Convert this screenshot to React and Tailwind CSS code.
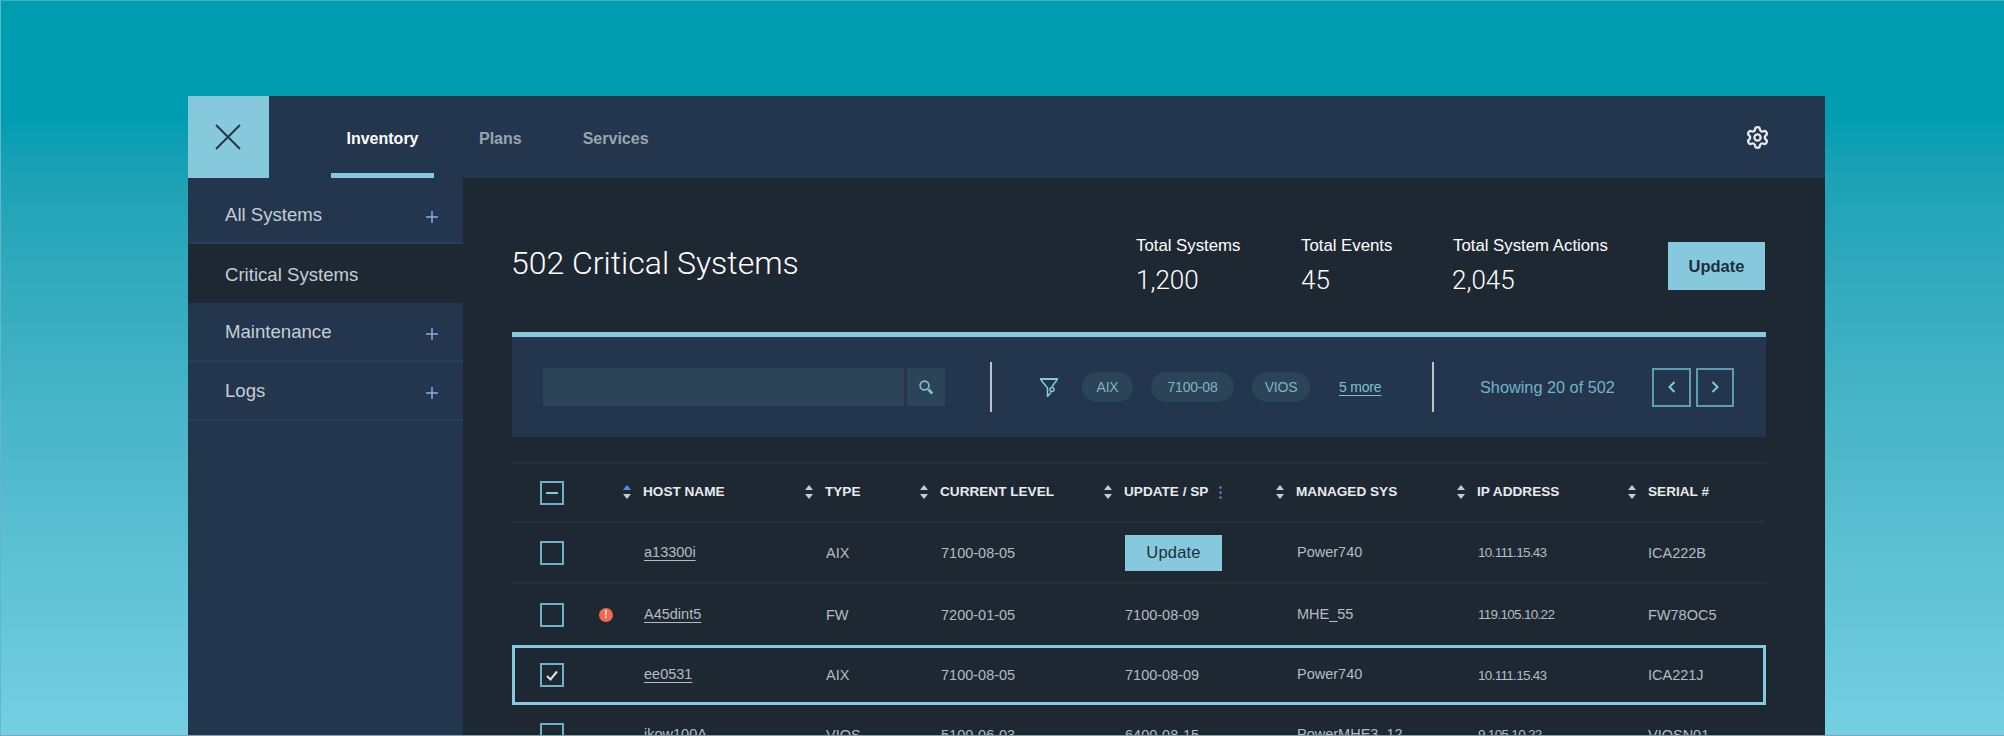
import { Settings } from 'lucide-react';

const sans = "font-['Liberation_Sans',Arial,sans-serif]";
const light = "font-['Roboto',sans-serif] font-light";

function PlusIcon() {
  return (
    <svg className="w-[12px] h-[12px] mt-[4px]" viewBox="0 0 12 12" fill="none" stroke="#8ba6e0" strokeWidth="1.5">
      <path d="M6 0v12M0 6h12" />
    </svg>
  );
}

function SortIcon({ active }) {
  return (
    <svg className="w-[10px] h-[16px] shrink-0" viewBox="0 0 10 16">
      <path d="M5 1l4 5H1z" fill={active ? '#5b86e5' : '#c4cbd1'} />
      <path d="M5 15l4-5H1z" fill="#c4cbd1" />
    </svg>
  );
}

function Checkbox({ state }) {
  return (
    <div className="w-[24px] h-[24px] border-2 border-[#6fb1c6] flex items-center justify-center shrink-0">
      {state === 'mixed' && <div className="w-[12px] h-[2px] bg-[#87c9dc]" />}
      {state === 'checked' && (
        <svg className="w-[12px] h-[11px]" viewBox="0 0 12 11" fill="none" stroke="#d7e6ec" strokeWidth="2">
          <path d="M1 6l3.5 3.5L11 1.5" />
        </svg>
      )}
    </div>
  );
}

const cols = 'grid grid-cols-[110px_182px_115px_184px_172px_181px_171px_139px] items-center';

const headers = ['HOST NAME', 'TYPE', 'CURRENT LEVEL', 'UPDATE / SP', 'MANAGED SYS', 'IP ADDRESS', 'SERIAL #'];

const rows = [
  { host: 'a13300i', type: 'AIX', level: '7100-08-05', update: null, sys: 'Power740', ip: '10.111.15.43', serial: 'ICA222B' },
  { host: 'A45dint5', type: 'FW', level: '7200-01-05', update: '7100-08-09', sys: 'MHE_55', ip: '119.105.10.22', serial: 'FW78OC5', alert: true },
  { host: 'ee0531', type: 'AIX', level: '7100-08-05', update: '7100-08-09', sys: 'Power740', ip: '10.111.15.43', serial: 'ICA221J', selected: true },
  { host: 'ikow100A', type: 'VIOS', level: '5100-06-03', update: '6400-08-15', sys: 'PowerMHE3_12', ip: '9.105.10.22', serial: 'VIOSN01' },
];

function Row({ row }) {
  const rowClass = row.selected
    ? 'h-[60px] shadow-[inset_0_0_0_3px_#87c9dc]'
    : row.alert
      ? 'h-[61px]'
      : 'h-[61px] border-b-2 border-[#232f3e]';
  return (
    <div className={`${cols} ${rowClass} text-[14.5px] text-[#b4bbc1]`}>
      <div className="flex items-center pl-[28px]">
        <Checkbox state={row.selected ? 'checked' : 'none'} />
        {row.alert && (
          <div className="ml-[35px] w-[14px] h-[14px] rounded-full bg-[#ee6a50] flex items-center justify-center text-[10px] font-bold text-white leading-none">
            !
          </div>
        )}
      </div>
      <div className="pl-[22px]">
        <span className="underline underline-offset-[3px]">{row.host}</span>
      </div>
      <div className="pl-[22px] pt-[2px]">{row.type}</div>
      <div className="pl-[22px] pt-[2px]">{row.level}</div>
      <div className="pl-[22px] pt-[2px]">
        {row.update || (
          <button className="w-[97px] h-[36px] -mt-[2px] bg-[#87c9dc] text-[#1e2f3f] text-[16.5px] tracking-[0.2px]">
            Update
          </button>
        )}
      </div>
      <div className="pl-[22px]">{row.sys}</div>
      <div className="pl-[22px] pt-[2px] text-[13.5px] tracking-[-0.7px]">{row.ip}</div>
      <div className="pl-[21px] pt-[2px]">{row.serial}</div>
    </div>
  );
}

export default function App() {
  return (
    <div className={`${sans} w-[2004px] h-[736px] overflow-hidden border-l border-t border-b border-l-[#5fb9c8] border-t-[#3fb0c0] border-b-[#7fa6b0] pt-[95px] pl-[187px] bg-linear-to-b from-[#009db1] from-[16%] to-[#74cfe1]`}>
      <div className="w-[1637px] h-[639px] flex flex-col overflow-hidden bg-[#23364e]">
        {/* Top nav */}
        <header className="h-[82px] shrink-0 flex">
          <div className="w-[81px] h-[82px] bg-[#87c9dc] flex items-center justify-center pr-[1px]">
            <svg className="w-[26px] h-[26px]" viewBox="0 0 26 26" fill="none" stroke="#263647" strokeWidth="2">
              <path d="M1 1l24 24M25 1L1 25" />
            </svg>
          </div>
          <nav className="flex ml-[62px] text-[16px] font-bold">
            <div className="w-[103px] h-[82px] flex items-center justify-center pt-[9px] border-b-[5px] border-[#87c9dc] text-white">
              Inventory
            </div>
            <div className="h-[82px] flex items-center pt-[4px] ml-[45px] text-[#9aa5ae]">Plans</div>
            <div className="h-[82px] flex items-center pt-[4px] ml-[61px] text-[#9aa5ae]">Services</div>
          </nav>
          <div className="ml-auto mr-[55px] h-[82px] flex items-center pt-[1px]">
            <Settings className="w-[25px] h-[25px] text-[#e6e9ec]" strokeWidth={2.2} />
          </div>
        </header>

        <div className="flex flex-1 min-h-0">
          {/* Sidebar */}
          <aside className="w-[275px] shrink-0 text-[18.6px] text-[#c6cdd3]">
            <div className="h-[66px] pl-[37px] pr-[25px] pt-[10px] flex items-center justify-between border-b-2 border-[#263f5b]">
              All Systems
              <PlusIcon />
            </div>
            <div className="h-[59px] pl-[37px] pt-[3px] flex items-center bg-[#1e2833]">Critical Systems</div>
            <div className="h-[59px] pl-[37px] pr-[25px] flex items-center justify-between border-b-2 border-[#263f5b]">
              Maintenance
              <PlusIcon />
            </div>
            <div className="h-[59px] pl-[37px] pr-[25px] flex items-center justify-between border-b-2 border-[#263f5b]">
              Logs
              <PlusIcon />
            </div>
          </aside>

          {/* Main content */}
          <main className="flex-1 min-w-0 bg-[#1e2833] pl-[49px] pr-[59px]">
            <div className="h-[154px] pt-[22px] flex items-center">
              <h1 className={`${light} text-[32px] text-white -mt-[6px] -ml-[1px]`}>502 Critical Systems</h1>
              <div className="ml-auto flex items-center">
                <div className="w-[165px]">
                  <div className="text-[16.8px] text-white -mt-[4px]">Total Systems</div>
                  <div className={`${light} text-[26px] text-white mt-[6px] leading-[30px]`}>1,200</div>
                </div>
                <div className="w-[152px]">
                  <div className="text-[16.8px] text-white -mt-[4px]">Total Events</div>
                  <div className={`${light} text-[26px] text-white mt-[6px] leading-[30px]`}>45</div>
                </div>
                <div className="w-[215px]">
                  <div className="text-[16.8px] text-white -mt-[4px]">Total System Actions</div>
                  <div className={`${light} text-[26px] text-white mt-[6px] leading-[30px] -ml-[1px]`}>2,045</div>
                </div>
                <button className="w-[97px] h-[48px] mr-[1px] bg-[#87c9dc] text-[#1e2f3f] text-[16.5px] font-bold">
                  Update
                </button>
              </div>
            </div>

            {/* Toolbar */}
            <div className="h-[105px] border-t-[5px] border-[#87c9dc] bg-[#23364e] flex items-center pl-[31px]">
              <div className="w-[361px] h-[38px] bg-[#2c4457]" />
              <div className="ml-[3px] w-[38px] h-[38px] bg-[#2c4457] flex items-center justify-center">
                <svg className="w-[15px] h-[15px]" viewBox="0 0 15 15" fill="none" stroke="#7fc0d4">
                  <circle cx="5.5" cy="5.5" r="4.4" strokeWidth="1.6" />
                  <path d="M9.5 9.5l3.8 4" strokeWidth="2.6" />
                </svg>
              </div>
              <div className="ml-[45px] w-[2px] h-[50px] bg-[#b9c4cf]" />
              <svg className="ml-[48px] w-[18px] h-[19px]" viewBox="0 0 18 19" fill="none" stroke="#87c9dc" strokeWidth="1.5">
                <path d="M0 1h18" strokeWidth="2" />
                <path d="M1 2l6.5 8v8.5L11 14.5M17 2l-5 6.5" />
                <circle cx="12" cy="11.5" r="2" />
              </svg>
              <div className="ml-[24px] w-[51px] h-[30px] rounded-full bg-[#2c4457] flex items-center justify-center text-[14px] tracking-[-0.2px] text-[#80b2c4]">AIX</div>
              <div className="ml-[18px] w-[83px] h-[30px] rounded-full bg-[#2c4457] flex items-center justify-center text-[14px] tracking-[-0.2px] text-[#80b2c4]">7100-08</div>
              <div className="ml-[18px] w-[58px] h-[30px] rounded-full bg-[#2c4457] flex items-center justify-center text-[14px] tracking-[-0.2px] text-[#80b2c4]">VIOS</div>
              <a className="ml-[29px] w-[43px] whitespace-nowrap text-[14px] tracking-[-0.2px] text-[#80c0d4] underline underline-offset-[3px]">5 more</a>
              <div className="ml-[50px] w-[2px] h-[50px] bg-[#b9c4cf]" />
              <div className="ml-[46px] w-[136px] whitespace-nowrap text-[16.3px] text-[#71b3c7]">Showing 20 of 502</div>
              <button className="ml-[36px] w-[39px] h-[39px] border-2 border-[#5d9db2] flex items-center justify-center">
                <svg className="w-[8px] h-[12px]" viewBox="0 0 8 12" fill="none" stroke="#87c9dc" strokeWidth="2">
                  <path d="M6.5 1L1.5 6l5 5" />
                </svg>
              </button>
              <button className="ml-[5px] w-[38px] h-[39px] border-2 border-[#5d9db2] flex items-center justify-center">
                <svg className="w-[8px] h-[12px]" viewBox="0 0 8 12" fill="none" stroke="#87c9dc" strokeWidth="2">
                  <path d="M1.5 1l5 5-5 5" />
                </svg>
              </button>
            </div>

            {/* Table */}
            <div className="mt-[25px]">
              <div className={`${cols} h-[61px] border-y-2 border-[#232f3e] text-[13.6px] font-bold text-[#e8ebee]`}>
                <div className="pl-[28px]">
                  <Checkbox state="mixed" />
                </div>
                {headers.map((h, i) => (
                  <div key={h} className="flex items-center gap-[11px] whitespace-nowrap">
                    <SortIcon active={i === 0} />
                    <span>{h}</span>
                    {h === 'UPDATE / SP' && (
                      <svg className="w-[3px] h-[13px]" viewBox="0 0 3 13" fill="#5b86e5">
                        <circle cx="1.5" cy="1.5" r="1.2" />
                        <circle cx="1.5" cy="6.5" r="1.2" />
                        <circle cx="1.5" cy="11.5" r="1.2" />
                      </svg>
                    )}
                  </div>
                ))}
              </div>
              {rows.map((row) => (
                <Row key={row.host} row={row} />
              ))}
            </div>
          </main>
        </div>
      </div>
    </div>
  );
}
